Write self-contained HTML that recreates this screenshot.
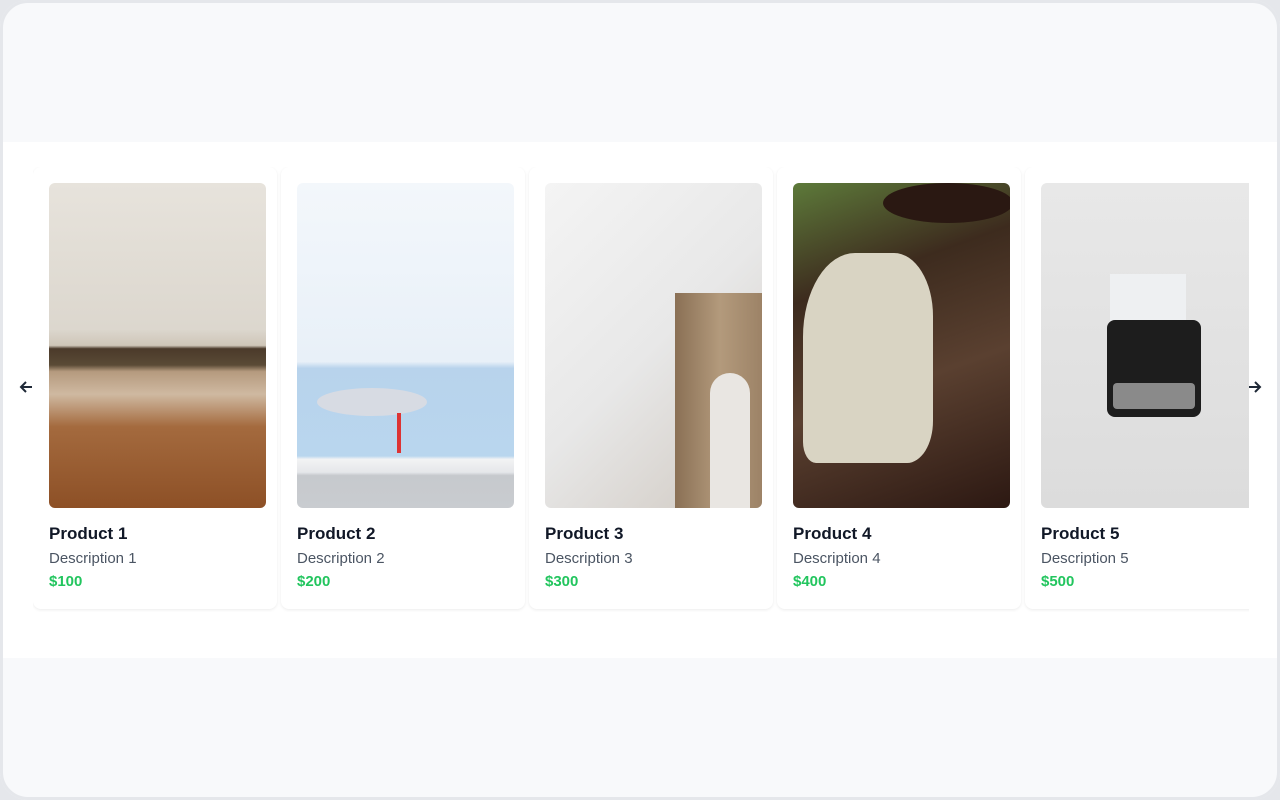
<!DOCTYPE html>
<html><head><meta charset="utf-8"><style>
*{margin:0;padding:0;box-sizing:border-box}
body{width:1280px;height:800px;background:#e5e7eb;font-family:"Liberation Sans",sans-serif;overflow:hidden;position:relative}
.frame{position:absolute;left:0;top:0;width:1280px;height:800px;border-radius:28px;background:#f8f9fb;overflow:hidden}
.border{position:absolute;left:0;top:0;width:1280px;height:800px;border:3px solid #e5e7eb;border-radius:28px;pointer-events:none}
.band{position:absolute;left:0;top:142px;width:1280px;height:516px;background:#fff}
.clip{position:absolute;left:33px;top:167px;width:1216px;height:445px;overflow:hidden}
.card{position:absolute;top:0;width:244px;height:442px;background:#fff;border-radius:8px;box-shadow:0 1px 3px rgba(0,0,0,.08)}
.img{position:absolute;left:16px;top:16px;width:217px;height:325px;border-radius:6px;overflow:hidden}
.t{position:absolute;left:16px;top:357px;font-size:17px;color:#111827;font-weight:600}
.d{position:absolute;left:16px;top:383px;font-size:15px;color:#4b5563}
.p{position:absolute;left:16px;top:406px;font-size:15px;color:#22c55e;font-weight:700}
.arr{position:absolute;top:378px;width:16px;height:18px}
</style></head><body>
<div class="frame">
<div class="band"></div>
<div class="clip">
 <div class="card" style="left:0">
  <div class="img" style="background:linear-gradient(#e7e3dc 0%,#dcd7ce 45%,#cfc6b8 50%,#4b3a2a 51%,#5a4a36 56%,#b59a7e 58%,#cfb9a1 65%,#a46a3e 75%,#8d5026 100%)"></div>
  <div class="t">Product 1</div><div class="d">Description 1</div><div class="p">$100</div>
 </div>
 <div class="card" style="left:248px">
  <div class="img" style="background:linear-gradient(#f3f7fb 0%,#e8f0f8 55%,#b8d3ec 57%,#b9d6ee 84%,#f2f3f4 85%,#e5e7ea 89%,#c6c9cd 90%,#c9ccd0 100%)">
   <div style="position:absolute;left:20px;top:205px;width:110px;height:28px;background:#d7dbe3;border-radius:50%"></div>
   <div style="position:absolute;left:100px;top:230px;width:4px;height:40px;background:#d33"></div>
  </div>
  <div class="t">Product 2</div><div class="d">Description 2</div><div class="p">$200</div>
 </div>
 <div class="card" style="left:496px">
  <div class="img" style="background:linear-gradient(135deg,#f4f4f4 0%,#e8e8e8 50%,#cfc8c0 100%)">
   <div style="position:absolute;left:130px;top:110px;width:90px;height:215px;background:linear-gradient(90deg,#8a7055,#b39a7c,#9b8165)"></div>
   <div style="position:absolute;left:165px;top:190px;width:40px;height:135px;background:#e9e6e2;border-radius:20px 20px 0 0"></div>
  </div>
  <div class="t">Product 3</div><div class="d">Description 3</div><div class="p">$300</div>
 </div>
 <div class="card" style="left:744px">
  <div class="img" style="background:linear-gradient(160deg,#5d7a3a 0%,#3d2b1e 30%,#5a4030 60%,#2c1812 100%)">
   <div style="position:absolute;left:10px;top:70px;width:130px;height:210px;background:#d9d4c3;border-radius:40% 30% 20% 10%"></div>
   <div style="position:absolute;left:90px;top:0;width:130px;height:40px;background:#2a1812;border-radius:50%"></div>
  </div>
  <div class="t">Product 4</div><div class="d">Description 4</div><div class="p">$400</div>
 </div>
 <div class="card" style="left:992px">
  <div class="img" style="background:linear-gradient(#e8e8e8,#dcdcdc)">
   <div style="position:absolute;left:69px;top:91px;width:76px;height:48px;background:#eef0f2"></div>
   <div style="position:absolute;left:66px;top:137px;width:94px;height:97px;background:#1d1d1d;border-radius:8px"></div>
   <div style="position:absolute;left:72px;top:200px;width:82px;height:26px;background:#8a8a8a;border-radius:4px"></div>
  </div>
  <div class="t">Product 5</div><div class="d">Description 5</div><div class="p">$500</div>
 </div>
</div>
<svg class="arr" style="left:18px" viewBox="0 0 16 18"><path d="M14 9H3M8 4L3 9l5 5" stroke="#1f2937" stroke-width="2" fill="none"/></svg>
<svg class="arr" style="left:1247px" viewBox="0 0 16 18"><path d="M2 9h11M8 4l5 5-5 5" stroke="#1f2937" stroke-width="2" fill="none"/></svg>
</div>
<div class="border"></div>
</body></html>
